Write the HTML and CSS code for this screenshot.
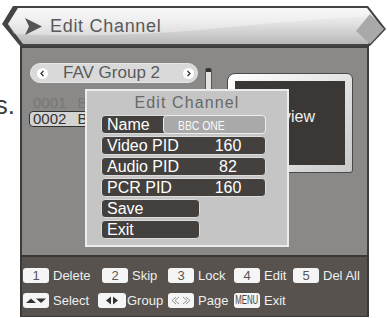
FILE: index.html
```html
<!DOCTYPE html>
<html>
<head>
<meta charset="utf-8">
<link rel="stylesheet" href="styles.css">
</head>
<body>
<div class="screen">
  <header class="banner">
    <svg class="banner-bg" width="387" height="46" viewBox="0 0 387 46">
      <defs>
        <linearGradient id="hg" x1="0" y1="0" x2="0" y2="1">
          <stop offset="0" stop-color="#f6f6f6"/>
          <stop offset="0.4" stop-color="#e4e4e4"/>
          <stop offset="1" stop-color="#b8b8b8"/>
        </linearGradient>
      </defs>
      <polygon points="13,6 368,6 386,29 370,46 20,46 2,24" fill="#444"/>
      <polygon points="18,8 367,8 383,29 368,44 23,44 8,24" fill="url(#hg)"/>
      <path d="M18 8 H367 L373 16 Q300 20 200 30 Q110 38 14 34 L8 24 Z" fill="#fff" opacity="0.35"/>
      <polygon points="356,31 370,14 384,29 370,44" fill="#a9a9a9"/>
      <polygon points="25,18 42,26.5 25,35 29,26.5" fill="#555"/>
    </svg>
    <h1 class="banner-title">Edit Channel</h1>
  </header>
  <div class="middle">
    <div class="gutter"><span>s.</span></div>
    <div class="column">
      <main class="panel">
        <div class="list-col">
          <div class="pill">
            <svg class="pill-btn" width="11" height="11" viewBox="0 0 11 11"><circle cx="5.5" cy="5.5" r="5.5" fill="#fff"/><polyline points="6.5,3 4,5.5 6.5,8" fill="none" stroke="#333" stroke-width="1.3"/></svg>
            <span class="pill-text">FAV Group 2</span>
            <svg class="pill-btn right" width="11" height="11" viewBox="0 0 11 11"><circle cx="5.5" cy="5.5" r="5.5" fill="#fff"/><polyline points="4.5,3 7,5.5 4.5,8" fill="none" stroke="#333" stroke-width="1.3"/></svg>
          </div>
          <div class="channels">
            <div class="ch"><span class="ch-no">0001</span><span>BBC ONE</span></div>
            <div class="ch sel"><span class="ch-no">0002</span><span>BBC TWO</span></div>
          </div>
        </div>
        <div class="scroll"></div>
        <div class="preview"><div class="preview-in">Preview</div></div>

        <div class="dialog">
          <div class="dlg-title">Edit Channel</div>
          <div class="fields">
            <div class="field name"><span class="lbl">Name</span><span class="val-box"><span class="narrow">BBC ONE</span></span></div>
            <div class="field pid"><span>Video PID</span><span class="val">160</span></div>
            <div class="field pid"><span>Audio PID</span><span class="val">82</span></div>
            <div class="field pid"><span>PCR PID</span><span class="val">160</span></div>
            <div class="field btn">Save</div>
            <div class="field btn">Exit</div>
          </div>
        </div>
      </main>
      <footer class="keybar">
        <div class="krow r1">
          <div class="kitem"><span class="key">1</span><span>Delete</span></div>
          <div class="kitem"><span class="key">2</span><span>Skip</span></div>
          <div class="kitem"><span class="key">3</span><span>Lock</span></div>
          <div class="kitem"><span class="key">4</span><span>Edit</span></div>
          <div class="kitem"><span class="key">5</span><span>Del All</span></div>
        </div>
        <div class="krow r2">
          <div class="kitem"><span class="key"><svg width="26" height="15" viewBox="0 0 26 15"><polygon points="3,10 8,5.5 13,10" fill="#333"/><polygon points="13,5.5 23,5.5 18,10" fill="#333"/></svg></span><span>Select</span></div>
          <div class="kitem tight"><span class="key wide"><svg width="28" height="15" viewBox="0 0 28 15"><polygon points="13,3.5 8,7.5 13,11.5" fill="#333"/><polygon points="15,3.5 20,7.5 15,11.5" fill="#333"/></svg></span><span>Group</span></div>
          <div class="kitem"><span class="key"><svg width="26" height="15" viewBox="0 0 26 15"><g fill="none" stroke="#888" stroke-width="0.9"><polyline points="8,4 4,7.5 8,11"/><polyline points="11,4 7,7.5 11,11"/><polyline points="15,4 19,7.5 15,11"/><polyline points="18,4 22,7.5 18,11"/></g></svg></span><span>Page</span></div>
          <div class="kitem"><span class="key"><span class="menu">MENU</span></span><span>Exit</span></div>
        </div>
      </footer>
    </div>
  </div>
</div>
</body>
</html>
```
FILE: styles.css
```css
* { box-sizing: border-box; }
html, body { margin: 0; padding: 0; }
body {
  width: 387px;
  height: 318px;
  overflow: hidden;
  background: #fff;
  font-family: "Liberation Sans", Arial, sans-serif;
}
.screen { position: relative; width: 387px; height: 318px; overflow: hidden; }

.banner { position: relative; height: 46px; }
.banner-bg { position: absolute; left: 0; top: 0; }
.banner-title {
  position: relative;
  margin: 0;
  padding: 6px 0 0 50px;
  font-size: 18px;
  font-weight: normal;
  line-height: 40px;
  letter-spacing: 0.7px;
  color: #595959;
}

.middle { display: flex; }
.gutter {
  width: 20px;
  display: flex;
  justify-content: flex-end;
  padding: 46px 5px 0 0;
  font-size: 26px;
  line-height: 26px;
  color: #3a3a3a;
  white-space: nowrap;
}
.column { width: 349px; display: flex; flex-direction: column; }

.panel {
  position: relative;
  height: 209px;
  border: 2px solid #3e3c3a;
  border-bottom: 0;
  background: #8a8987;
  display: flex;
  align-items: flex-start;
  padding: 15px 0 0 8px;
}

.list-col { width: 168px; display: flex; flex-direction: column; }
.pill {
  height: 20px;
  border-radius: 10px;
  background: #d9d9d9;
  border: 1px solid #e6e6e6;
  display: flex;
  align-items: center;
  padding-left: 6px;
}
.pill-btn { display: block; flex: none; }
.pill-btn.right { margin-left: auto; margin-right: 3px; }
.pill-text {
  margin-left: 15px;
  font-size: 17px;
  line-height: 20px;
  color: #5a5a5a;
}
.channels { margin-top: 12px; display: flex; flex-direction: column; }
.ch {
  height: 16px;
  display: flex;
  gap: 11px;
  padding-left: 3px;
  font-size: 15px;
  line-height: 16px;
  color: #787776;
  white-space: nowrap;
}
.ch.sel {
  margin-left: -1px;
  width: 150px;
  border: 1px solid #333;
  border-radius: 4px;
  background: #d4d4d4;
  color: #333;
  line-height: 14px;
}

.scroll {
  margin: 5px 0 0 7px;
  width: 7px;
  height: 30px;
  background: #e2e2e2;
  border: 1px solid #555;
  border-top: 4px solid #333;
  border-radius: 3px 3px 0 0;
}
.preview {
  margin: 10px 0 0 15px;
  width: 126px;
  height: 100px;
  padding: 7px;
  border: 1px solid #4a4a4a;
  border-radius: 8px 6px 3px 6px;
  background: linear-gradient(135deg, #ffffff, #e6e6e6 50%, #c8c8c8);
}
.preview-in {
  height: 84px;
  background: #3a3734;
  color: #f2f2f2;
  font-size: 16px;
  display: flex;
  align-items: center;
  justify-content: center;
  padding: 0 7px 12px 0;
}

.dialog {
  position: absolute;
  left: 63px;
  top: 41px;
  width: 204px;
  height: 158px;
  border: 2px solid #ececec;
  background: #c5c5c5;
}
.dlg-title {
  height: 24px;
  line-height: 24px;
  text-align: center;
  font-size: 16px;
  letter-spacing: 1.1px;
  color: #686868;
}
.fields {
  display: flex;
  flex-direction: column;
  gap: 2px;
  padding-left: 14px;
}
.field {
  width: 165px;
  height: 19px;
  border: 1px solid #dcdcdc;
  border-radius: 4px;
  background: #43403d;
  color: #fff;
  font-size: 16px;
  line-height: 17px;
  padding-left: 5px;
  white-space: nowrap;
}
.field.pid { display: grid; grid-template-columns: 89px 64px; }
.val { text-align: center; }
.field.name { display: flex; }
.lbl { width: 56px; }
.val-box {
  flex: 1;
  margin: -1px -1px -1px 0;
  height: 19px;
  border: 1px solid #ededed;
  border-radius: 4px;
  background: #a9a9a9;
  padding-left: 14px;
  overflow: hidden;
}
.narrow {
  display: inline-block;
  font-size: 13px;
  line-height: 17px;
  transform: scaleX(0.8);
  transform-origin: left center;
  color: #fafafa;
}
.field.btn { width: 99px; }

.keybar {
  height: 62px;
  background: #57524d;
  border: 2px solid #3a3835;
  border-bottom-width: 1px;
  padding: 11px 0 0 1px;
  display: flex;
  flex-direction: column;
  gap: 10px;
}
.krow { display: grid; height: 15px; }
.krow.r1 { grid-template-columns: 79px 66px 66px 59px auto; }
.krow.r2 { grid-template-columns: 75px 70px 66px auto; }
.kitem {
  display: flex;
  align-items: center;
  gap: 4px;
  font-size: 13px;
  line-height: 15px;
  color: #efefef;
  white-space: nowrap;
}
.kitem.tight { gap: 1px; }
.key {
  width: 26px;
  height: 15px;
  border-radius: 3px;
  background: #f5f5f5;
  color: #555;
  font-size: 13px;
  line-height: 15px;
  text-align: center;
  display: flex;
  align-items: center;
  justify-content: center;
  overflow: hidden;
}
.key svg { display: block; }
.key.wide { width: 28px; }
.menu {
  display: inline-block;
  font-size: 12px;
  line-height: 15px;
  transform: scaleX(0.65);
  color: #444;
}
```
